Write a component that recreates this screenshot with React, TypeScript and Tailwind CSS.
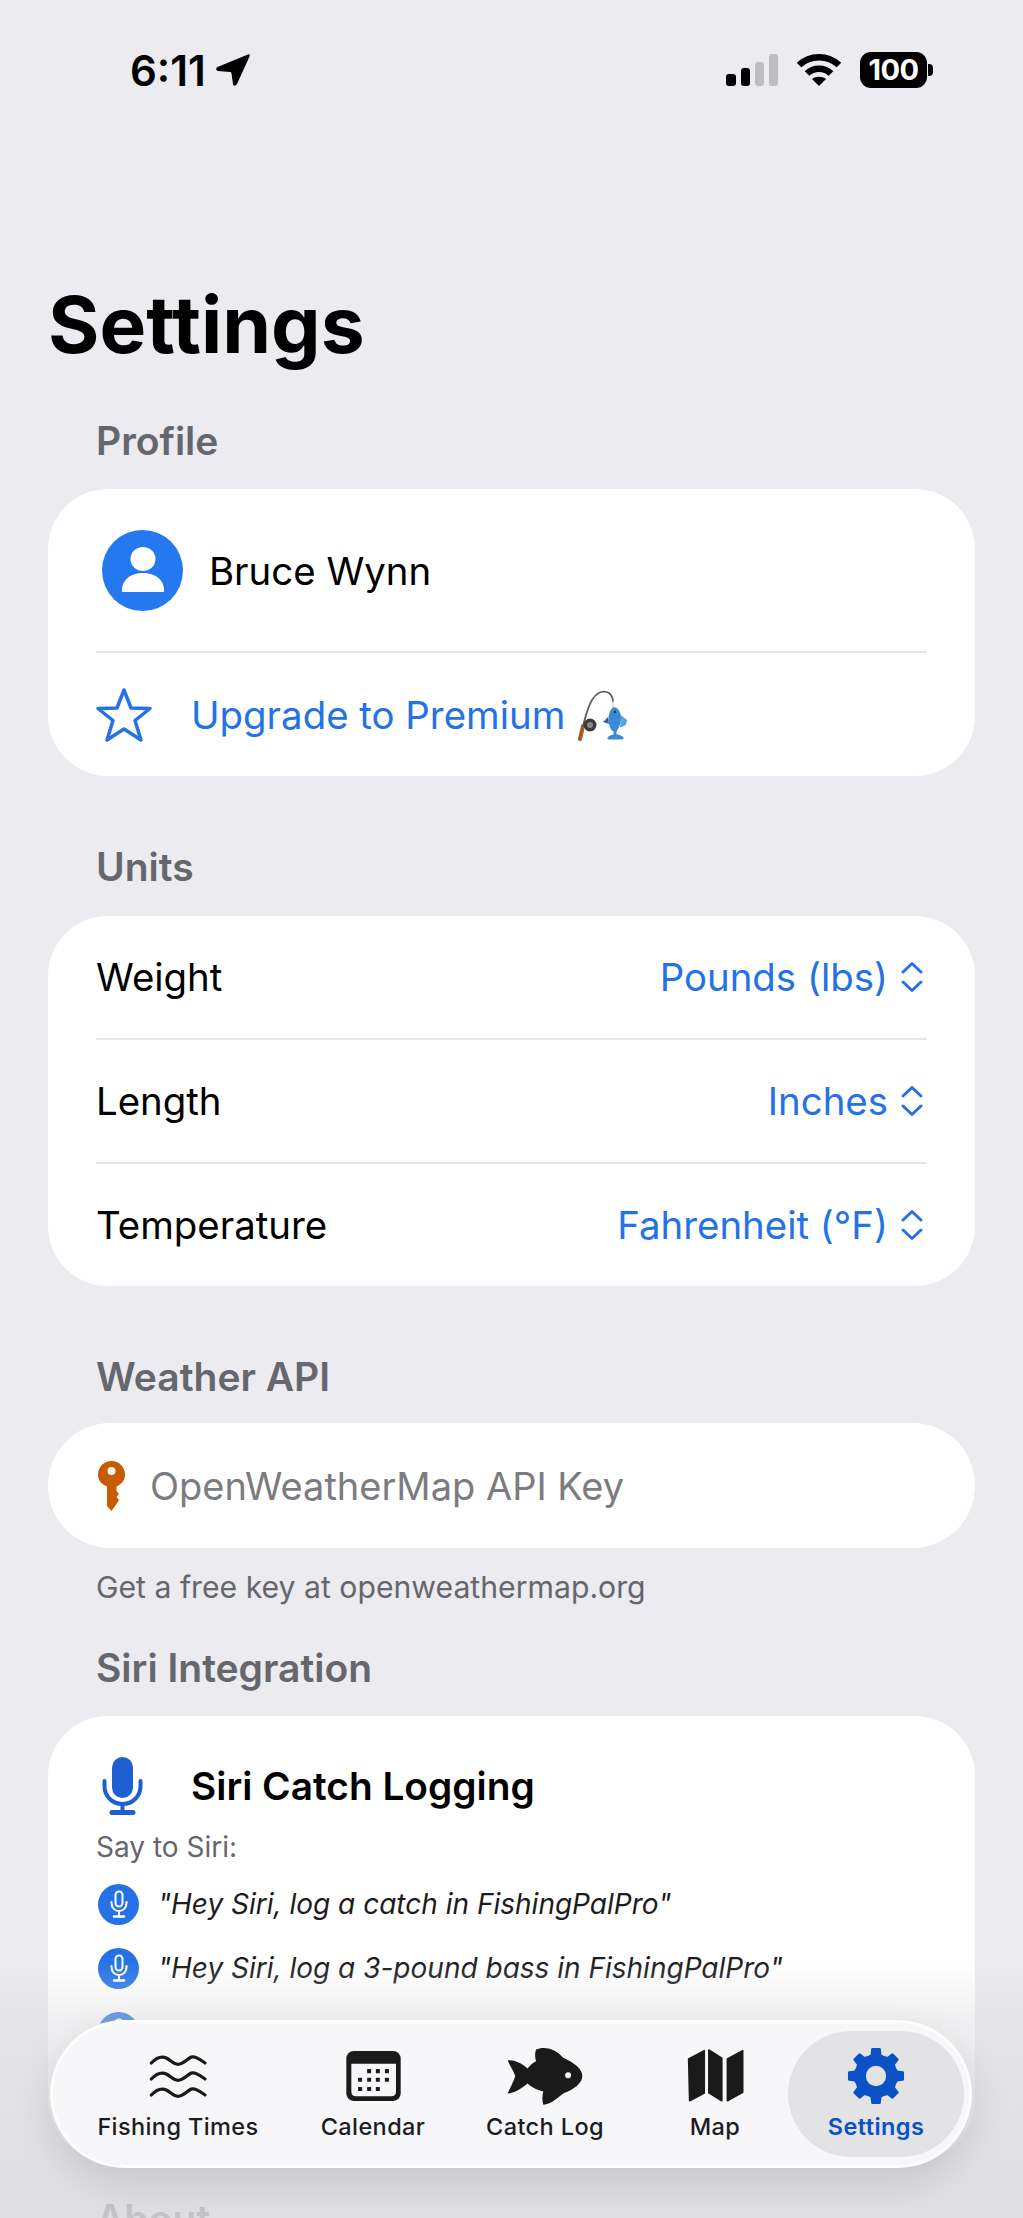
import React from "react";

const gearPath = (() => {
  const pts: string[] = [];
  const teeth = 8;
  for (let i = 0; i < teeth; i++) {
    const a = (i / teeth) * Math.PI * 2 - Math.PI / 2;
    const step = (Math.PI * 2) / teeth;
    const p = (r: number, t: number) =>
      `${(30 + r * Math.cos(t)).toFixed(2)} ${(30 + r * Math.sin(t)).toFixed(2)}`;
    pts.push(p(21, a - step * 0.5));
    pts.push(p(22, a - step * 0.26));
    pts.push(p(28, a - step * 0.17));
    pts.push(p(28, a + step * 0.17));
    pts.push(p(22, a + step * 0.26));
  }
  return "M" + pts.join("L") + "Z";
})();

function SectionLabel({ children, className }: { children: React.ReactNode; className?: string }) {
  return (
    <div className={`ml-[48px] flex h-[48px] items-center text-[39px] font-semibold text-[#66666d] ${className ?? ""}`}>
      {children}
    </div>
  );
}

function Divider() {
  return <div className="mx-[48px] h-[2px] bg-[#e6e6ea]" />;
}

function Chevrons() {
  return (
    <svg width="24" height="32" viewBox="0 0 24 32" fill="none" stroke="#2472e5" strokeWidth="3" strokeLinecap="round" strokeLinejoin="round">
      <path d="M3 11 L12 2.5 L21 11" />
      <path d="M3 21 L12 29.5 L21 21" />
    </svg>
  );
}

function UnitRow({ label, value }: { label: string; value: string }) {
  return (
    <div className="flex h-[122px] items-center justify-between pl-[48px] pr-[51px] text-[38.4px]">
      <span className="pt-[2px] text-black">{label}</span>
      <span className="flex items-center gap-[12px] text-[#2472e5]">
        <span className="pt-[2px]">{value}</span>
        <Chevrons />
      </span>
    </div>
  );
}

function SmallMic() {
  return (
    <div className="flex h-[41px] w-[41px] shrink-0 items-center justify-center rounded-full bg-[#2472e5]">
      <svg width="18" height="28" viewBox="0 0 18 28" fill="none" stroke="#fff" strokeWidth="2" strokeLinecap="round">
        <rect x="5.5" y="1.5" width="7" height="15" rx="3.5" />
        <path d="M1.5 12 V13 C1.5 18 5 21 9 21 C13 21 16.5 18 16.5 13 V12" />
        <path d="M9 21 V26" />
        <path d="M4 26.5 H14" strokeWidth="2.5" />
      </svg>
    </div>
  );
}

function Phrase({ text }: { text: string }) {
  return (
    <div className="flex h-[64px] items-center gap-[19px] pl-[50px]">
      <SmallMic />
      <span className="text-[28px] italic text-[#1c1c1e]">{text}</span>
    </div>
  );
}

function PoleEmoji() {
  return (
    <svg width="52" height="52" viewBox="0 0 52 52" fill="none">
      <path d="M3 50 L6 37" stroke="#a8592a" strokeWidth="4" strokeLinecap="round" />
      <path d="M6 37 C10 22 14 6 24 3 C30 1.5 35 4 36 12" stroke="#5f5f5f" strokeWidth="1.8" strokeLinecap="round" />
      <path d="M36 12 V20" stroke="#b9c4cf" strokeWidth="1" />
      <circle cx="13" cy="36" r="6.5" fill="#3a3a3a" />
      <circle cx="13" cy="36" r="3" fill="#888" />
      <path d="M37 18 C44 19 46 30 42 38 L40 42 L35 42 C30 34 30 22 37 18 Z" fill="#3b8ad6" />
      <path d="M44 26 L50 31 C50 36 47 38 43 38 Z" fill="#5ba3e0" />
      <path d="M31 28 L26 33 L32 35 Z" fill="#3d55c4" />
      <path d="M38 41 V46 M32 49 C36 46 41 46 45 49 Z" stroke="#3b8ad6" strokeWidth="3" fill="#3b8ad6" strokeLinejoin="round" />
      <circle cx="38" cy="23" r="1.2" fill="#123" />
    </svg>
  );
}

function Waves() {
  const d = "M335 162 C350 146 365 140 380 147 C395 155 400 166 415 166 C430 166 440 152 455 144 C470 140 485 155 496 162";
  return (
    <svg width="58" height="44" viewBox="328 135 174 132" fill="none" stroke="#1a1a1a" strokeWidth="9.5" strokeLinecap="round">
      <path d={d} />
      <path d={d} transform="translate(0 48)" />
      <path d={d} transform="translate(0 96)" />
    </svg>
  );
}

function CalendarIcon() {
  const dots: [number, number][] = [
    [988, 187], [1014, 187], [1041, 187],
    [961, 213], [988, 213], [1014, 213], [1041, 213],
    [961, 240], [988, 240], [1014, 240],
  ];
  return (
    <svg width="55" height="50" viewBox="920 127 162 149">
      <rect x="920" y="127" width="162" height="149" rx="22" fill="#1a1a1a" />
      <path d="M935 165 H1068 V248 Q1068 262 1054 262 H949 Q935 262 935 248 Z" fill="#f7f7f9" />
      {dots.map(([x, y]) => (
        <rect key={`${x}-${y}`} x={x - 6} y={y - 6} width="12" height="12" rx="1.5" fill="#1a1a1a" />
      ))}
    </svg>
  );
}

function FishIcon() {
  return (
    <svg width="76" height="58" viewBox="20 118 230 174">
      <path
        d="M22 158 C40 155 62 165 82 182 C90 172 98 165 108 160 C104 150 104 135 108 125 C130 115 165 120 190 150 C225 165 248 185 248 205 C248 225 225 245 190 258 C175 270 155 290 130 292 C126 280 126 265 130 252 C112 248 95 240 82 228 C62 245 40 258 22 258 C30 240 40 222 45 205 C40 190 30 175 22 158 Z"
        fill="#1a1a1a"
      />
      <circle cx="205" cy="203" r="9" fill="#f7f7f9" />
    </svg>
  );
}

function MapIcon() {
  return (
    <svg width="57" height="53" viewBox="558 122 172 160" fill="#1a1a1a" stroke="#1a1a1a" strokeWidth="5" strokeLinejoin="round">
      <path d="M563 152 L610 127 V255 L566 278 Z" />
      <path d="M624 125 L663 150 V278 L624 254 Z" />
      <path d="M680 152 L726 127 V253 L680 278 Z" />
    </svg>
  );
}

function GearIcon() {
  return (
    <svg width="58" height="58" viewBox="0 0 60 60">
      <path d={gearPath} fill="#0b50c4" stroke="#0b50c4" strokeWidth="2.5" strokeLinejoin="round" />
      <circle cx="30" cy="30" r="10.5" fill="#e3e3e5" />
    </svg>
  );
}

function TabItem({ icon, label, className, active }: { icon: React.ReactNode; label: string; className: string; active?: boolean }) {
  return (
    <div className={`flex flex-col items-center ${className}`}>
      <div className="flex h-[60px] items-center justify-center">{icon}</div>
      <span className={`mt-[5px] text-[23.5px] leading-[32px] tracking-[0.4px] ${active ? "font-semibold text-[#0b50c4]" : "font-medium text-[#1c1c1e]"}`}>
        {label}
      </span>
    </div>
  );
}

export default function App() {
  return (
    <div className="relative h-[2218px] w-[1023px] overflow-hidden bg-[#ebebf0] font-['Inter',sans-serif]">
      {/* status bar */}
      <div className="flex h-[140px] items-center justify-between pl-[130px] pr-[90px]">
        <div className="flex items-center gap-[10px] text-[42px] font-semibold text-black">
          6:11
          <svg width="34" height="32" viewBox="0 0 34 32" fill="#000">
            <path d="M32 0.500 C33.500 0 34 1 33.500 2.500 L21 30 C19.500 32.500 17 32 17 30 L15.500 19.500 C15.300 18.500 15 18 14 18 L2 17 C0 16.500 -0.500 14 1.500 13 Z" />
          </svg>
        </div>
        <div className="flex items-center">
          <div className="flex items-end gap-[5px]">
            <div className="h-[12px] w-[10px] rounded-[3px] bg-black" />
            <div className="h-[18px] w-[9px] rounded-[3px] bg-black" />
            <div className="h-[24px] w-[9px] rounded-[3px] bg-[#bdbdc2]" />
            <div className="h-[32px] w-[9px] rounded-[3px] bg-[#bdbdc2]" />
          </div>
          <svg className="ml-[18px]" width="46" height="34" viewBox="0 0 46 34" fill="none" stroke="#000" strokeWidth="6.500">
            <path d="M3 12 C14 1.500 32 1.500 43 12" />
            <path d="M11 20.500 C17.500 14 28.500 14 35 20.500" />
            <path d="M23 33 L16 26 C20 23 26 23 30 26 Z" fill="#000" stroke="none" />
          </svg>
          <div className="ml-[18px] flex items-center">
            <div className="flex h-[36px] w-[67px] items-center justify-center rounded-[11px] bg-black text-[29px] font-bold tracking-[-0.5px] text-white">
              100
            </div>
            <div className="ml-[1px] h-[12px] w-[5px] rounded-r-[4px] bg-black" />
          </div>
        </div>
      </div>

      <div className="px-[48px]">
        <h1 className="mt-[135px] h-[100px] text-[78.5px] font-bold leading-[100px] text-black">Settings</h1>

        <SectionLabel className="mt-[42px] mb-[24px]">Profile</SectionLabel>
        <div className="overflow-hidden rounded-[60px] bg-white">
          <div className="flex h-[162px] items-center pl-[54px]">
            <div className="flex h-[81px] w-[81px] items-center justify-center rounded-full bg-[#2478f0]">
              <svg width="44" height="46" viewBox="0 0 44 46" fill="#fff">
                <ellipse cx="22" cy="12" rx="12.500" ry="12" />
                <path d="M1 45 C0 33 10 26 22 26 C34 26 44 33 43 45 Z" />
              </svg>
            </div>
            <span className="ml-[26px] pt-[3px] text-[38.4px] text-black">Bruce Wynn</span>
          </div>
          <Divider />
          <div className="flex h-[123px] items-center pl-[47px]">
            <svg width="58" height="56" viewBox="0 0 58 56" fill="none" stroke="#2472e5" strokeWidth="3.500" strokeLinejoin="round">
              <path d="M29 3 L36 21 L55 21.500 L40 33.500 L46 53 L29 42 L12 53 L18 33.500 L3 21.500 L22 21 Z" />
            </svg>
            <span className="ml-[38px] pt-[2px] text-[38.4px] text-[#2472e5]">Upgrade to Premium</span>
            <span className="ml-[12px]">
              <PoleEmoji />
            </span>
          </div>
        </div>

        <SectionLabel className="mt-[67px] mb-[25px]">Units</SectionLabel>
        <div className="rounded-[60px] bg-white">
          <UnitRow label="Weight" value="Pounds (lbs)" />
          <Divider />
          <UnitRow label="Length" value="Inches" />
          <Divider />
          <UnitRow label="Temperature" value="Fahrenheit (°F)" />
        </div>

        <SectionLabel className="mt-[67px] mb-[22px]">Weather API</SectionLabel>
        <div className="flex h-[125px] items-center rounded-[62px] bg-white pl-[50px]">
          <svg width="27" height="50" viewBox="0 0 27 50" fill="#c85a00">
            <path fillRule="evenodd" d="M13.500 0 C21 0 27 6 27 13.500 C27 19 24 23 18.500 25.500 V30 L21 33 L18.500 36 L21 39 L18.500 43 L13.500 50 L9 45 V25.500 C3 23 0 19 0 13.500 C0 6 6 0 13.500 0 Z M13.500 6 C11 6 9.500 7.500 9.500 10 C9.500 12.500 11 14 13.500 14 C16 14 17.500 12.500 17.500 10 C17.500 7.500 16 6 13.500 6 Z" />
          </svg>
          <span className="ml-[25px] pt-[2px] text-[38px] text-[#7c7c80]">OpenWeatherMap API Key</span>
        </div>
        <div className="ml-[48px] mt-[20px] flex h-[40px] items-center text-[30.2px] text-[#66666d]">
          Get a free key at openweathermap.org
        </div>

        <SectionLabel className="mt-[36px] mb-[24px]">Siri Integration</SectionLabel>
        <div className="h-[444px] rounded-[60px] bg-white pt-[39px]">
          <div className="flex h-[62px] items-center pl-[54px]">
            <svg width="41" height="58" viewBox="0 0 41 58" fill="none" stroke="#1d5fd0" strokeWidth="4" strokeLinecap="round">
              <rect x="10" y="0" width="21" height="41" rx="10.500" fill="#1d5fd0" stroke="none" />
              <path d="M2.500 24 V29 C2.500 39 10 47 20.500 47 C31 47 38.500 39 38.500 29 V24" />
              <path d="M20.500 47 V54" />
              <path d="M10 55.500 H31" strokeWidth="5" />
            </svg>
            <span className="ml-[48px] text-[38.8px] font-semibold text-black">Siri Catch Logging</span>
          </div>
          <div className="ml-[48px] mt-[14px] flex h-[32px] items-center text-[28px] text-[#66666d]">Say to Siri:</div>
          <div className="mt-[9px]">
            <Phrase text={'"Hey Siri, log a catch in FishingPalPro"'} />
            <Phrase text={'"Hey Siri, log a 3-pound bass in FishingPalPro"'} />
            <Phrase text={'"Hey Siri, log a catch"'} />
          </div>
        </div>

        <SectionLabel className="mt-[35px]">About</SectionLabel>
      </div>

      {/* fade behind the floating tab bar */}
      <div className="pointer-events-none absolute inset-x-0 bottom-0 h-[258px] bg-gradient-to-b from-[#dcdce0]/0 via-[#dcdce0]/45 via-25% to-[#dcdce0]/80" />

      <div className="absolute bottom-[50px] left-[50px] flex h-[148px] w-[922px] items-center rounded-[74px] border-[3px] border-white/70 bg-[#f7f7f9] pl-[5px] shadow-[0_14px_40px_rgba(0,0,0,0.12)]">
        <TabItem icon={<Waves />} label="Fishing Times" className="w-[240px]" />
        <TabItem icon={<CalendarIcon />} label="Calendar" className="w-[150px]" />
        <TabItem icon={<FishIcon />} label="Catch Log" className="w-[194px]" />
        <TabItem icon={<MapIcon />} label="Map" className="w-[146px]" />
        <div className="flex h-[126px] w-[176px] items-center justify-center rounded-[63px] bg-[#e3e3e5]">
          <TabItem icon={<GearIcon />} label="Settings" className="w-full" active />
        </div>
      </div>
    </div>
  );
}
